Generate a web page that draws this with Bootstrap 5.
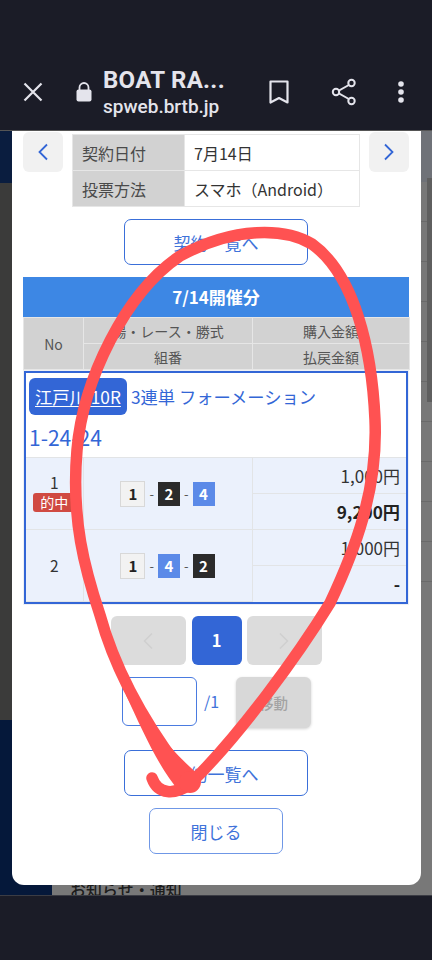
<!DOCTYPE html>
<html lang="ja">
<head>
<meta charset="utf-8">
<title>BOAT RACE</title>
<link rel="stylesheet" href="https://cdn.jsdelivr.net/npm/bootstrap@5.3.0/dist/css/bootstrap.min.css">
<style>
html,body{height:960px;width:432px;overflow:hidden;margin:0;background:#1b1c27;font-family:"Noto Sans CJK JP","Noto Sans",sans-serif;}
.appbar{height:131px;background:#1b1c27;padding:68px 0 0 0;border-bottom:1px solid #555;}
.appbar-row{height:48px;}
.app-ico{flex:none;display:block;}
.app-title{font-family:Roboto,sans-serif;color:#e4e4ec;width:150px;line-height:1;}
.app-name{font-size:24px;font-weight:700;letter-spacing:.3px;white-space:nowrap;}
.app-host{font-size:19px;font-weight:500;margin-top:5px;}
.stage{position:relative;height:764px;overflow:hidden;}
.backdrop{height:764px;}
.back-left{width:52px;flex:none;}
.bl-a{height:52px;background:#0a1d3f;}
.bl-b{height:537px;background:#3b3b3a;}
.bl-c{height:175px;background:#05183a;}
.back-main{background:#787878;position:relative;}
.br-top{height:51px;background:#6f7278;}
.br-row{height:40px;border-bottom:1px solid #6a6a6a;}
.br-stripe{position:absolute;right:0;top:47px;width:5px;height:224px;background:#5f5f5f;}
.notice{position:absolute;left:18px;bottom:-5px;font-size:16px;line-height:22px;color:#1c1c1c;font-weight:500;white-space:nowrap;}
.sheet{position:absolute;left:12px;top:0;width:409px;height:754px;background:#fff;border-radius:0 0 12px 12px;padding:1px 12px 0 11px;overflow:hidden;}
.arrow-box{width:40px;height:40px;background:#f1f1f1;border-radius:6px;flex:none;}
.info-tbl{width:288px;margin:2px 0 0;border-collapse:collapse;font-size:16px;color:#333;}
.info-tbl th,.info-tbl td{height:36px;padding:0 0 0 9px;border:1.5px solid #e6e6e6;font-weight:400;vertical-align:middle;line-height:1;box-shadow:none;}
.info-tbl th{width:112px;background:#d2d2d2;color:#4a4a4a;}
.info-tbl td{background:#fff;}
.line-btn{display:block;background:#fff;border:1.5px solid #3a6fd9;color:#3f73da;border-radius:7px;font-size:17px;line-height:1;padding:0;text-align:center;}
.line-btn:hover{background:#fff;color:#3f73da;}
.list-btn{width:184px;height:46px;margin:12px auto 0;line-height:43px;}
.list-btn-low{margin-top:21px;}
.close-btn{width:134px;height:46px;margin:12px auto 0;line-height:43px;border-color:#6f97e6;}
.date-bar{height:40px;margin-top:12px;background:#3d87e4;color:#fff;font-weight:700;font-size:17px;line-height:40px;text-align:center;}
.head-tbl{width:386px;table-layout:fixed;border-collapse:collapse;margin:0;font-size:14px;color:#555;}
.head-tbl th,.head-tbl td{height:26px;padding:0;background:#d2d2d2;border:1.5px solid #e6e6e6;font-weight:400;text-align:center;vertical-align:middle;line-height:1;box-shadow:none;}
.outer-box{padding:1px;background:#eef0f3;margin-top:0;}
.entry-box{border:2px solid #3366d6;background:#fff;width:384px;}
.entry-head{padding:5px 3px 0 3px;height:84px;color:#3366d6;}
.race-chip{display:inline-block;background:#3366d6;color:#fff;border-radius:6px;padding:0 6px;height:37px;line-height:37px;font-size:17.3px;text-decoration:underline;text-underline-offset:2px;}
.bet-kind{font-size:17.3px;margin-left:4px;}
.bet-code{font-size:21px;line-height:24px;margin-top:10px;}
.row-tbl{width:100%;table-layout:fixed;border-collapse:collapse;margin:0;font-size:15.5px;color:#333;}
.row-tbl td{background:#ebf1fc;border:1px solid #e2e4e6;padding:0;text-align:center;vertical-align:middle;height:36px;line-height:1;box-shadow:none;}
.row-tbl tr>td:first-child{border-left:0;}
.row-tbl tr>td:last-child{border-right:0;}
.row-tbl tr:last-child td{border-bottom:0;}
.row-tbl td.amt{text-align:right;padding-right:6px;font-size:17px;}
.row-tbl td.paid{font-size:17.2px;font-weight:700;color:#222;}
.hit-tag{display:block;margin:3px auto 0;width:43px;height:19px;line-height:19px;background:#d04a42;color:#fff;font-size:14px;border-radius:3px;}
.pick{display:inline-flex;align-items:center;gap:4px;color:#555;font-size:13px;}
.boat{display:inline-block;width:22px;height:24px;line-height:24px;font-size:15px;font-weight:700;text-align:center;}
.boat-w{width:25px;height:26px;line-height:24px;background:#f2f2f2;border:1px solid #d8d8d8;color:#222;}
.boat-k{background:#2b2b2b;color:#fff;}
.boat-b{background:#5b8ae8;color:#fff;}
.pager{margin-top:11px;height:49px;}
.pg-side{width:75px;height:49px;background:#dcdcdc;border-radius:6px;}
.pg-on{width:50px;height:49px;background:#3366d6;color:#fff;border-radius:6px;font-weight:700;font-size:16.5px;line-height:49px;text-align:center;margin:0 5px 0 6px;}
.jump{margin-top:12px;height:52px;padding-left:99px;}
.jump-in{width:75px;height:49px;border:1.5px solid #4a7be0;border-radius:6px;background:#fff;padding:0;}
.jump-of{color:#3f73da;font-size:16px;width:39px;padding:0 0 4px 7px;}
.jump-go{width:75px;height:51px;background:#d8d8d8;color:#a3a3a3;border:0;border-radius:6px;font-size:14.5px;font-weight:500;box-shadow:0 1px 3px rgba(0,0,0,.18);}
.jump-go:disabled{background:#d8d8d8;color:#a3a3a3;opacity:1;border:0;}
.scribble{position:absolute;left:0;top:0;width:432px;height:960px;pointer-events:none;z-index:5;}
.navfoot{height:65px;background:#1b1c27;border-top:1px solid #3b3c44;}
</style>
</head>
<body>
<header class="appbar">
  <div class="appbar-row d-flex align-items-center">
    <svg class="app-ico" style="margin-left:23px" width="20" height="20" viewBox="0 0 20 20"><path d="M1.5 1.5 18.5 18.5M18.5 1.5 1.5 18.5" stroke="#e4e4ec" stroke-width="2.2" fill="none"/></svg>
    <svg class="app-ico" style="margin-left:33px" width="16" height="20" viewBox="0 0 16 20"><path d="M3.5 8V5.5a4.5 4.5 0 0 1 9 0V8" stroke="#e4e4ec" stroke-width="1.8" fill="none"/><rect x="0.5" y="7.5" width="15" height="12" rx="2" fill="#e4e4ec"/></svg>
    <div class="app-title" style="margin-left:11px">
      <div class="app-name">BOAT RA...</div>
      <div class="app-host">spweb.brtb.jp</div>
    </div>
    <svg class="app-ico" style="margin-left:16px" width="20" height="24" viewBox="0 0 20 24"><path d="M1.5 1.5h17v21L10 18 1.5 22.5z" stroke="#e4e4ec" stroke-width="2.2" fill="none" stroke-linejoin="round"/></svg>
    <svg class="app-ico" style="margin-left:42px" width="26" height="28" viewBox="0 0 26 28"><path d="M20.5 5.5 5.5 14l15 8.5" stroke="#e4e4ec" stroke-width="2" fill="none"/><circle cx="20.5" cy="5" r="3.2" fill="#1b1c27" stroke="#e4e4ec" stroke-width="2"/><circle cx="5" cy="14" r="3.2" fill="#1b1c27" stroke="#e4e4ec" stroke-width="2"/><circle cx="20.5" cy="23" r="3.2" fill="#1b1c27" stroke="#e4e4ec" stroke-width="2"/></svg>
    <svg class="app-ico" style="margin-left:41px" width="6" height="24" viewBox="0 0 6 24"><circle cx="3" cy="4" r="2.8" fill="#e4e4ec"/><circle cx="3" cy="12" r="2.8" fill="#e4e4ec"/><circle cx="3" cy="20" r="2.8" fill="#e4e4ec"/></svg>
  </div>
</header>
<main class="stage">
  <div class="backdrop d-flex">
    <div class="back-left">
      <div class="bl-a"></div><div class="bl-b"></div><div class="bl-c"></div>
    </div>
    <div class="back-main flex-grow-1">
      <div class="br-top"></div>
      <div class="br-row"></div><div class="br-row"></div><div class="br-row"></div><div class="br-row"></div><div class="br-row"></div><div class="br-row"></div><div class="br-row"></div><div class="br-row"></div><div class="br-row"></div><div class="br-row"></div>
      <div class="br-stripe"></div>
      <div class="notice">お知らせ・通知</div>
    </div>
  </div>
  <section class="sheet">
    <div class="d-flex justify-content-between">
      <div class="arrow-box d-flex align-items-center justify-content-center">
        <svg width="12" height="18" viewBox="0 0 12 18"><path d="M10 1.5 2.5 9l7.5 7.5" stroke="#3366d6" stroke-width="1.8" fill="none"/></svg>
      </div>
      <table class="info-tbl">
        <tr><th>契約日付</th><td>7月14日</td></tr>
        <tr><th>投票方法</th><td>スマホ（Android）</td></tr>
      </table>
      <div class="arrow-box d-flex align-items-center justify-content-center">
        <svg width="12" height="18" viewBox="0 0 12 18"><path d="M2 1.5 9.5 9 2 16.5" stroke="#3366d6" stroke-width="1.8" fill="none"/></svg>
      </div>
    </div>
    <button type="button" class="btn line-btn list-btn">契約一覧へ</button>
    <div class="date-bar">7/14開催分</div>
    <table class="head-tbl">
      <colgroup><col style="width:60px"><col style="width:169px"><col style="width:157px"></colgroup>
      <tr><td rowspan="2">No</td><td>場・レース・勝式</td><td>購入金額</td></tr>
      <tr><td>組番</td><td>払戻金額</td></tr>
    </table>
    <div class="outer-box">
      <div class="entry-box">
        <div class="entry-head">
          <div><a class="race-chip">江戸川 10R</a><span class="bet-kind">3連単 フォーメーション</span></div>
          <div class="bet-code">1-24-24</div>
        </div>
        <table class="row-tbl">
          <colgroup><col style="width:57px"><col style="width:169px"><col></colgroup>
          <tr>
            <td rowspan="2">1<span class="hit-tag">的中</span></td>
            <td rowspan="2"><span class="pick"><span class="boat boat-w">1</span>-<span class="boat boat-k">2</span>-<span class="boat boat-b">4</span></span></td>
            <td class="amt">1,000円</td>
          </tr>
          <tr><td class="amt paid">9,200円</td></tr>
          <tr>
            <td rowspan="2">2</td>
            <td rowspan="2"><span class="pick"><span class="boat boat-w">1</span>-<span class="boat boat-b">4</span>-<span class="boat boat-k">2</span></span></td>
            <td class="amt">1,000円</td>
          </tr>
          <tr><td class="amt paid">-</td></tr>
        </table>
      </div>
    </div>
    <div class="pager d-flex justify-content-center">
      <div class="pg-side d-flex align-items-center justify-content-center"><svg width="12" height="18" viewBox="0 0 12 18"><path d="M10 1.5 2.5 9l7.5 7.5" stroke="#cfcfcf" stroke-width="1.5" fill="none"/></svg></div>
      <div class="pg-on">1</div>
      <div class="pg-side d-flex align-items-center justify-content-center"><svg width="12" height="18" viewBox="0 0 12 18"><path d="M2 1.5 9.5 9 2 16.5" stroke="#cfcfcf" stroke-width="1.5" fill="none"/></svg></div>
    </div>
    <div class="jump d-flex align-items-start">
      <input class="jump-in" type="text" aria-label="page">
      <div class="jump-of align-self-center">/1</div>
      <button type="button" class="btn jump-go" disabled>移動</button>
    </div>
    <button type="button" class="btn line-btn list-btn list-btn-low">契約一覧へ</button>
    <button type="button" class="btn line-btn close-btn">閉じる</button>
  </section>
</main>
<footer class="navfoot"></footer>
<svg class="scribble" viewBox="0 0 432 960">
  <g fill="none" stroke="#ff5252" stroke-linecap="round" stroke-linejoin="round">
    <path stroke-width="11.5" d="M152 778C158 795 175 795 190 784C240 735 298 655 330 603C355 550 378 490 375 420C372 350 355 275 312 244C285 228 235 226 180 256C125 293 83 380 77 450C71 520 85 570 100 615C115 670 145 725 188 780"/>
  </g>
  <path fill="#ff5252" d="M135 695 C 150 725 170 750 200 776 L 200 786 L 180 792 C 160 770 142 730 126 695Z"/>
  <circle cx="190" cy="782" r="11" fill="#ff5252"/>
</svg>
</body>
</html>
